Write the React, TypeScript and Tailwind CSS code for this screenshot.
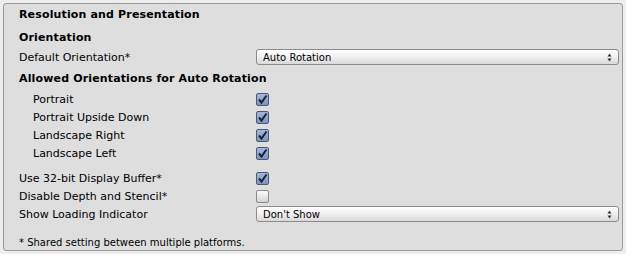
import React from 'react'

const font = { fontFamily: '"DejaVu Sans", Verdana, sans-serif' }

const Check = ({ checked }: { checked: boolean }) =>
  checked ? (
    <div className="w-[13px] h-[13px] rounded-[2px] border border-[#4a5a73] bg-gradient-to-b from-[#a3b8db] to-[#7893c2] flex items-center justify-center">
      <svg width="11" height="11" viewBox="0 0 11 11">
        <path d="M2 5.5 L4.5 8.5 L9.5 1.5" stroke="#1c2433" strokeWidth="2" fill="none" />
      </svg>
    </div>
  ) : (
    <div className="w-[13px] h-[13px] rounded-[2px] border border-[#8a8a8a] bg-gradient-to-b from-[#fbfbfb] to-[#d4d4d4]" />
  )

const Popup = ({ value }: { value: string }) => (
  <div className="h-[16px] flex-1 flex items-center justify-between rounded-[3px] border border-[#8c8c8c] bg-gradient-to-b from-[#ffffff] via-[#f0f0f0] to-[#d9d9d9] pl-[6px] pr-[6px] text-[10px]">
    <span>{value}</span>
    <svg width="5" height="9" viewBox="0 0 5 9">
      <path d="M2.5 0.5 L4.5 3.5 L0.5 3.5 Z" fill="#333" />
      <path d="M2.5 8.5 L4.5 5.5 L0.5 5.5 Z" fill="#333" />
    </svg>
  </div>
)

const Row = ({
  label,
  indent,
  children,
}: {
  label: string
  indent?: boolean
  children: React.ReactNode
}) => (
  <div className="h-[18px] flex items-center">
    <div className={`w-[237px] pt-[2px] ${indent ? 'pl-[14px]' : ''}`}>{label}</div>
    <div className="flex-1 flex items-center pr-[2px]">{children}</div>
  </div>
)

const App = () => (
  <div className="w-[626px] h-[254px] bg-[#eeeeee] p-[3px] text-black text-[11px]" style={font}>
    <div className="h-[248px] w-[620px] rounded-[3px] border border-[#9a9a9a] bg-[#dedede] pl-[15px] pr-[1px]">
      <div className="h-[20px] pt-[2px] flex items-center font-bold tracking-[0.15px]">Resolution and Presentation</div>
      <div className="mt-[4px] h-[18px] pt-[2px] flex items-center font-bold tracking-[0.15px]">Orientation</div>
      <div className="mt-[2px]">
        <Row label="Default Orientation*">
          <Popup value="Auto Rotation" />
        </Row>
      </div>
      <div className="mt-[3px] h-[18px] pt-[2px] flex items-center font-bold tracking-[0.15px]">Allowed Orientations for Auto Rotation</div>
      <div className="mt-[3px]">
        <Row label="Portrait" indent>
          <Check checked />
        </Row>
        <Row label="Portrait Upside Down" indent>
          <Check checked />
        </Row>
        <Row label="Landscape Right" indent>
          <Check checked />
        </Row>
        <Row label="Landscape Left" indent>
          <Check checked />
        </Row>
      </div>
      <div className="mt-[7px]">
        <Row label="Use 32-bit Display Buffer*">
          <Check checked />
        </Row>
        <Row label="Disable Depth and Stencil*">
          <Check checked={false} />
        </Row>
        <Row label="Show Loading Indicator">
          <Popup value="Don't Show" />
        </Row>
      </div>
      <div className="mt-[9px] h-[18px] pt-[2px] flex items-center text-[10px]">* Shared setting between multiple platforms.</div>
    </div>
  </div>
)

export default App
